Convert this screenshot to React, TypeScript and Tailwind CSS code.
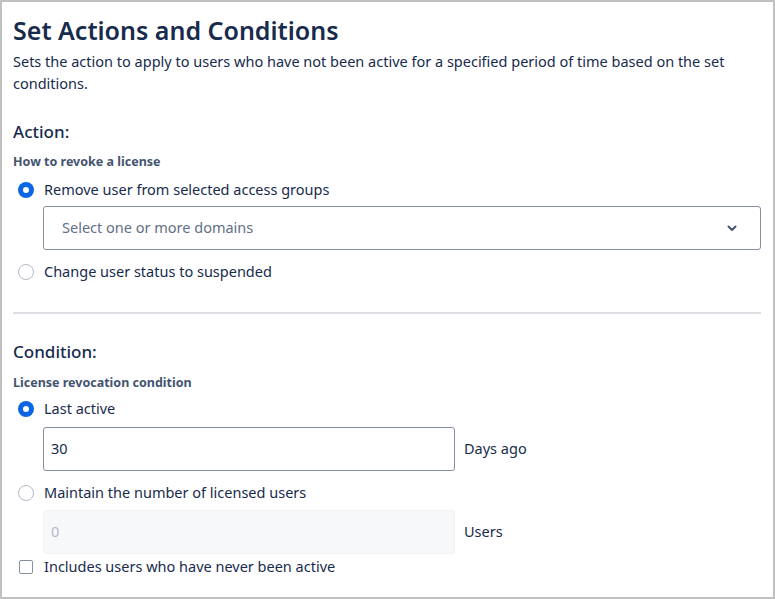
import React from "react";

const font = { fontFamily: '"Noto Sans", "Liberation Sans", sans-serif' };

function Radio({ checked }: { checked?: boolean }) {
  return checked ? (
    <span className="inline-flex h-[16px] w-[16px] shrink-0 items-center justify-center rounded-full bg-[#0c66e4]">
      <span className="h-[6px] w-[6px] rounded-full bg-white" />
    </span>
  ) : (
    <span className="inline-block h-[16px] w-[16px] shrink-0 rounded-full border border-[#b3b9c4] bg-white" />
  );
}

function Option({ checked, label, className }: { checked?: boolean; label: string; className: string }) {
  return (
    <div className={`flex h-[24px] items-center pl-[5px] ${className}`}>
      <Radio checked={checked} />
      <span className="ml-[10px] text-[14.5px] text-[#172b4d]">{label}</span>
    </div>
  );
}

export default function App() {
  return (
    <div className="h-[599px] w-[775px] border-2 border-[#c1c1c1] bg-white text-[#172b4d]" style={font}>
      <div className="px-[11px] pt-[12px]">
        <h1 className="text-[25px] font-semibold leading-[32px] text-[#172b4d]">Set Actions and Conditions</h1>
        <p className="mt-[4px] pr-[14px] text-[14.5px] leading-[22px] text-[#172b4d]">
          Sets the action to apply to users who have not been active for a specified period of time based on the set conditions.
        </p>

        <h2 className="mt-[26px] text-[17px] font-medium leading-[24px]">Action:</h2>
        <div className="mt-[10px] text-[12.5px] font-bold leading-[16px] text-[#44546f]">How to revoke a license</div>
        <Option className="mt-[8px]" checked label="Remove user from selected access groups" />
        <div className="ml-[30px] mt-[4px] flex h-[44px] w-[718px] items-center justify-between rounded-[3px] border border-[#8590a2] pl-[18px] pr-[22px]">
          <span className="text-[14.5px] text-[#626f86]">Select one or more domains</span>
          <svg width="12" height="12" viewBox="0 0 12 12" fill="none">
            <path d="M2.5 4.5 6 8l3.5-3.5" stroke="#44546f" strokeWidth="2" strokeLinecap="round" strokeLinejoin="round" />
          </svg>
        </div>
        <Option className="mt-[10px]" label="Change user status to suspended" />

        <div className="mt-[28px] h-[2px] w-[748px] bg-[#dcdfe4]" />

        <h2 className="mt-[26px] text-[17px] font-medium leading-[24px]">Condition:</h2>
        <div className="mt-[11px] text-[12.5px] font-bold leading-[16px] text-[#44546f]">License revocation condition</div>
        <Option className="mt-[6px]" checked label="Last active" />
        <div className="ml-[30px] mt-[6px] flex items-center">
          <div className="flex h-[44px] w-[412px] items-center rounded-[3px] border border-[#8590a2] px-[7px] text-[14.5px] text-[#172b4d]">30</div>
          <span className="ml-[9px] text-[14.5px]">Days ago</span>
        </div>
        <Option className="mt-[10px]" label="Maintain the number of licensed users" />
        <div className="ml-[30px] mt-[5px] flex items-center">
          <div className="flex h-[44px] w-[412px] items-center rounded-[3px] border border-[#f1f2f4] bg-[#f7f8f9] px-[7px] text-[14.5px] text-[#b3b9c4]">0</div>
          <span className="ml-[9px] text-[14.5px]">Users</span>
        </div>
        <div className="mt-[1px] flex h-[24px] items-center pl-[6px]">
          <span className="inline-block h-[14px] w-[14px] rounded-[2px] border-[1.5px] border-[#8590a2] bg-white" />
          <span className="ml-[11px] text-[14.5px]">Includes users who have never been active</span>
        </div>
      </div>
    </div>
  );
}
